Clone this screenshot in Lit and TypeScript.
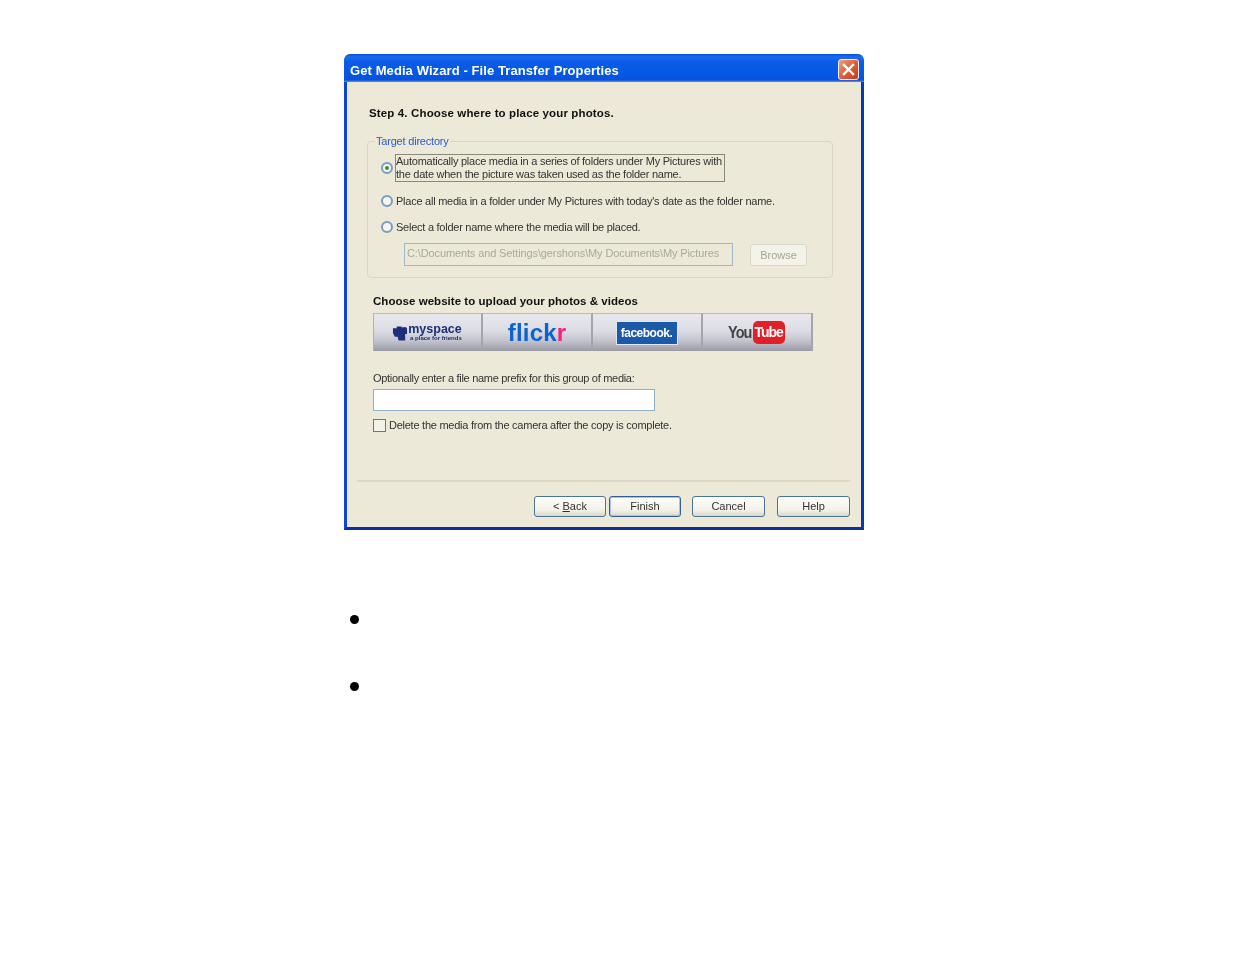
import { LitElement, html, css } from "lit";
import { customElement } from "lit/decorators.js";

@customElement("app-root")
export class AppRoot extends LitElement {
  static styles = css`
    :host { display: block; background: #fff; min-height: 954px; font-family: "Liberation Sans", Arial, sans-serif; color: #222; padding: 54px 0 0 344px; box-sizing: border-box; }
    .dialog { width: 520px; height: 476px; display: flex; flex-direction: column; filter: blur(0.7px); }
    .titlebar { height: 28px; flex: none; box-sizing: border-box; display: flex; align-items: center; justify-content: space-between; padding: 0 5px 0 6px; border-radius: 6px 6px 0 0; background: linear-gradient(#0a4fd8 0, #1a6cf0 3px, #0a5ce6 8px, #0558e4 20px, #0a50d8 26px, #6f93d8 28px); }
    .title { color: #fff; font-size: 13px; font-weight: 700; letter-spacing: 0.09px; padding-top: 5px; }
    .close { width: 21px; height: 21px; margin-top: 3px; box-sizing: border-box; border: 1px solid #f2f2f2; border-radius: 3px; background: linear-gradient(135deg, #f0a080, #dd5a30 55%, #c83a18); display: flex; align-items: center; justify-content: center; }
    .close svg { display: block; }
    .body { flex: 1; box-sizing: border-box; background: #ece9d8; border: solid #0a46d8; border-width: 0 3px 3px 3px; border-right-color: #0a38b8; border-bottom-color: #0a30a8; padding: 24px 0 0 20px; display: flex; flex-direction: column; align-items: flex-start; }
    .heading { margin-left: 2px; font-size: 11.5px; line-height: 14px; font-weight: 700; color: #111; letter-spacing: 0.14px; }
    fieldset { margin: 14px 0 0; padding: 6px 0 11px 13px; width: 466px; box-sizing: border-box; border: 1px solid #d8d5c5; border-radius: 4px; min-inline-size: 0; }
    legend { margin-left: -6px; padding: 0 1px; font-size: 11px; line-height: 14px; color: #2a5cc8; letter-spacing: -0.2px; }
    .row { display: flex; align-items: center; gap: 2px; font-size: 11px; line-height: 13px; letter-spacing: -0.25px; color: #333; }
    .row + .row { margin-top: 12px; }
    .row.plain { line-height: 14px; gap: 3px; }
    .radio { width: 12px; height: 12px; flex: none; box-sizing: border-box; border: 2px solid #7b9cbc; border-radius: 50%; background: #f6f6f0; display: flex; align-items: center; justify-content: center; }
    .radio i { width: 4px; height: 4px; border-radius: 50%; background: #2f9a2f; }
    .focus { width: 330px; height: 28px; box-sizing: border-box; border: 1px solid #8a8a7c; white-space: nowrap; }
    .pathrow { display: flex; align-items: flex-start; gap: 17px; margin: 9px 0 0 23px; }
    .path { width: 329px; height: 23px; box-sizing: border-box; border: 1px solid #9fb6cc; padding-left: 2px; font-size: 11px; line-height: 19px; color: #a8a89c; letter-spacing: -0.12px; white-space: nowrap; }
    .browse { width: 57px; height: 22px; margin-top: 1px; box-sizing: border-box; border: 1px solid #d8d6c8; border-radius: 3px; background: #f4f3ea; font-size: 11px; line-height: 20px; text-align: center; color: #a4a498; }
    .section { margin: 16px 0 0 6px; font-size: 11.5px; line-height: 14px; font-weight: 700; color: #111; letter-spacing: 0.04px; }
    .sites { margin: 5px 0 0 6px; display: flex; }
    .site { width: 110px; height: 38px; box-sizing: border-box; display: flex; align-items: center; justify-content: center; background: linear-gradient(#e8e8ee, #dcdce4 45%, #c4c4ce 72%, #9a9aa4); border-top: 1px solid #b8b8c0; border-right: 2px solid #a4a4ac; }
    .site:first-child { border-left: 1px solid #b0b0b8; }
    .ms { display: flex; align-items: center; color: #1c2f78; margin-top: 1px; margin-right: 1px; }
    .ms svg { display: block; }
    .ms-text { display: flex; flex-direction: column; align-items: flex-end; font-weight: 700; }
    .ms-a { font-size: 12.5px; line-height: 11px; }
    .ms-b { font-size: 6px; line-height: 7px; }
    .flickr { font-size: 24px; font-weight: 700; line-height: 26px; color: #0a63d0; letter-spacing: 0.2px; }
    .flickr b { color: #f5207f; }
    .fb { width: 62px; height: 24px; margin-right: 1px; background: #1a5aa8; border: 1px solid #dfe6f2; box-sizing: border-box; color: #fff; font-size: 12px; font-weight: 700; line-height: 22px; text-align: center; letter-spacing: -0.5px; }
    .yt { display: flex; align-items: center; margin-right: 5px; }
    .yt-you { font-size: 17px; font-weight: 700; color: #444; letter-spacing: -1.2px; margin-right: 1px; transform: scaleX(0.85); transform-origin: right; }
    .yt-tube { background: #e2202a; color: #fff; border-radius: 5px; font-size: 14px; font-weight: 700; line-height: 23px; height: 23px; width: 32px; overflow: hidden; text-align: center; letter-spacing: -1px; }
    .label { margin: 20px 0 0 6px; font-size: 11px; line-height: 14px; letter-spacing: -0.3px; color: #333; }
    .input { margin: 4px 0 0 6px; width: 282px; height: 22px; box-sizing: border-box; border: 1px solid #8fb0cc; background: #fff; }
    .check { margin: 7px 0 0 6px; display: flex; align-items: center; gap: 3px; font-size: 11px; line-height: 14px; letter-spacing: -0.25px; color: #333; }
    .box { width: 13px; height: 13px; box-sizing: border-box; border: 1px solid #5c7c9c; background: #f2f2ea; }
    .sep { margin: 48px 0 0 -10px; width: 493px; height: 2px; background: #dcd9c8; }
    .footer { margin: 14px 0 0 167px; display: flex; }
    .btn { width: 72px; height: 21px; box-sizing: border-box; border: 1px solid #4a7494; border-radius: 3px; background: linear-gradient(#fdfdfa, #f2f1e8 70%, #dcd8c8); font-size: 11px; line-height: 19px; text-align: center; color: #333; }
    .btn.def { border-color: #2f5f9c; box-shadow: inset 0 0 0 1px #a8c4e8; margin-left: 3px; }
    .btn.cancel { margin-left: 11px; width: 73px; }
    .btn.help { margin-left: 12px; width: 73px; }
    .bullets { list-style: none; margin: 85px 0 0; padding: 0 0 0 6px; display: flex; flex-direction: column; gap: 58px; }
    .bullets li { width: 9px; height: 9px; border-radius: 50%; background: #000; }
  `;

  render() {
    return html`
      <section class="dialog">
        <header class="titlebar">
          <span class="title">Get Media Wizard - File Transfer Properties</span>
          <span class="close">
            <svg width="13" height="13" viewBox="0 0 13 13"><path d="M2 2 L11 11 M11 2 L2 11" stroke="#fff" stroke-width="2.4" stroke-linecap="square"/></svg>
          </span>
        </header>
        <div class="body">
          <div class="heading">Step 4. Choose where to place your photos.</div>
          <fieldset>
            <legend>Target directory</legend>
            <div class="row">
              <span class="radio"><i></i></span>
              <div class="focus">Automatically place media in a series of folders under My Pictures with<br />the date when the picture was taken used as the folder name.</div>
            </div>
            <div class="row plain"><span class="radio"></span><span>Place all media in a folder under My Pictures with today's date as the folder name.</span></div>
            <div class="row plain"><span class="radio"></span><span>Select a folder name where the media will be placed.</span></div>
            <div class="pathrow">
              <div class="path">C:\\Documents and Settings\\gershons\\My Documents\\My Pictures</div>
              <div class="browse">Browse</div>
            </div>
          </fieldset>
          <div class="section">Choose website to upload your photos &amp; videos</div>
          <div class="sites">
            <div class="site">
              <div class="ms">
                <svg width="16" height="18" viewBox="0 0 17 18"><path fill="#1c2f78" d="M1 4 h4 v-2 h5 v1 h3 a2 2 0 0 1 3 2 v5 h-2 v7 h-7 l-1-4 h-3 l-2-4 z"/></svg>
                <div class="ms-text"><span class="ms-a">myspace</span><span class="ms-b">a place for friends</span></div>
              </div>
            </div>
            <div class="site"><div class="flickr">flick<b>r</b></div></div>
            <div class="site"><div class="fb">facebook.</div></div>
            <div class="site"><div class="yt"><span class="yt-you">You</span><span class="yt-tube">Tube</span></div></div>
          </div>
          <div class="label">Optionally enter a file name prefix for this group of media:</div>
          <div class="input"></div>
          <div class="check"><span class="box"></span><span>Delete the media from the camera after the copy is complete.</span></div>
          <div class="sep"></div>
          <div class="footer">
            <div class="btn">&lt; <u>B</u>ack</div>
            <div class="btn def">Finish</div>
            <div class="btn cancel">Cancel</div>
            <div class="btn help">Help</div>
          </div>
        </div>
      </section>
      <ul class="bullets"><li></li><li></li></ul>
    `;
  }
}
